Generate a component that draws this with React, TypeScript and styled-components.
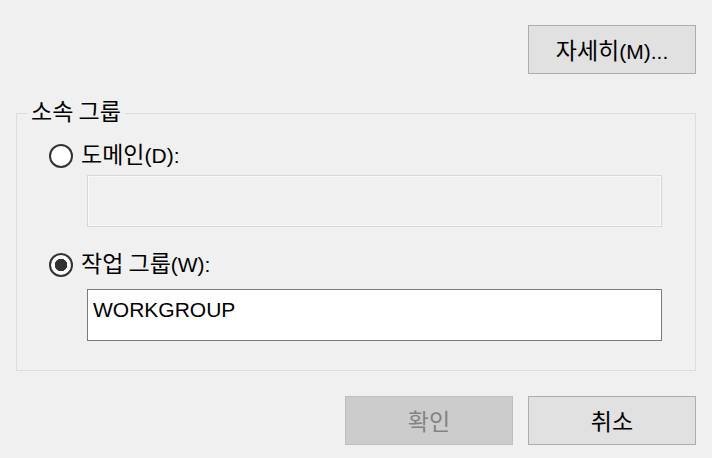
import React from 'react';
import styled, { createGlobalStyle } from 'styled-components';

const Global = createGlobalStyle`
  html, body { margin: 0; padding: 0; background: #f0f0f0; }
  body {
    font-family: "Liberation Sans", "Noto Sans CJK KR", sans-serif;
    font-size: 21px;
    color: #000;
  }
`;

const Dialog = styled.div`
  width: 712px;
  height: 458px;
  box-sizing: border-box;
  padding: 25px 16px 0 16px;
  display: flex;
  flex-direction: column;
`;

const ButtonBar = styled.div<{ $gap?: number; $top?: number }>`
  display: flex;
  justify-content: flex-end;
  gap: ${(p) => p.$gap ?? 0}px;
  margin-top: ${(p) => p.$top ?? 0}px;
`;

const Button = styled.button<{ $disabled?: boolean }>`
  width: 168px;
  height: 49px;
  box-sizing: border-box;
  margin: 0;
  padding: 0;
  border: 1px solid ${(p) => (p.$disabled ? '#bfbfbf' : '#adadad')};
  background: ${(p) => (p.$disabled ? '#cccccc' : '#e1e1e1')};
  color: ${(p) => (p.$disabled ? '#838383' : '#000')};
  font: inherit;
  line-height: 1;
`;

const Ko = styled.span`
  font-family: "Noto Sans CJK KR", sans-serif;
  font-size: 23px;
  line-height: 1;
`;

const Group = styled.fieldset`
  margin: 25px 0 0 0;
  padding: 0;
  min-width: 0;
  border: 1px solid #dcdcdc;
`;

const Legend = styled.legend`
  margin-left: 10px;
  padding: 0 4px;
  line-height: 28px;
`;

const GroupBody = styled.div`
  display: flex;
  flex-direction: column;
  padding: 15px 33px 29px 32px;
`;

const RadioRow = styled.label<{ $top?: number }>`
  display: flex;
  align-items: center;
  gap: 8px;
  height: 28px;
  margin-top: ${(p) => p.$top ?? 0}px;
  line-height: 28px;
`;

const Radio = styled.input.attrs({ type: 'radio' })`
  appearance: none;
  margin: 0;
  width: 24px;
  height: 24px;
  box-sizing: border-box;
  border-radius: 50%;
  border: 2px solid #333;
  background: #fff;
  flex: none;
  &:checked {
    background: radial-gradient(circle, #333 0 6px, #fff 6.5px);
  }
`;

const TextBox = styled.input<{ $top?: number }>`
  margin: ${(p) => p.$top ?? 0}px 0 0 38px;
  height: 52px;
  box-sizing: border-box;
  padding: 0 5px 10px 5px;
  font: inherit;
  color: #000;
  border: 1px solid #7a7a7a;
  background: #fff;
  outline: none;
  &:disabled {
    border-color: #d6d6d6;
    background: #f0f0f0;
    box-shadow: inset 0 0 0 1px #f9f9f9;
  }
`;

export default function App() {
  return (
    <>
      <Global />
      <Dialog>
        <ButtonBar>
          <Button>
            <Ko>자세히</Ko>(M)...
          </Button>
        </ButtonBar>
        <Group>
          <Legend>
            <Ko>소속 그룹</Ko>
          </Legend>
          <GroupBody>
            <RadioRow>
              <Radio name="member" />
              <span>
                <Ko>도메인</Ko>(D):
              </span>
            </RadioRow>
            <TextBox $top={5} disabled />
            <RadioRow $top={24}>
              <Radio name="member" defaultChecked />
              <span>
                <Ko>작업 그룹</Ko>(W):
              </span>
            </RadioRow>
            <TextBox $top={10} defaultValue="WORKGROUP" />
          </GroupBody>
        </Group>
        <ButtonBar $gap={15} $top={25}>
          <Button $disabled disabled>
            <Ko>확인</Ko>
          </Button>
          <Button>
            <Ko>취소</Ko>
          </Button>
        </ButtonBar>
      </Dialog>
    </>
  );
}
